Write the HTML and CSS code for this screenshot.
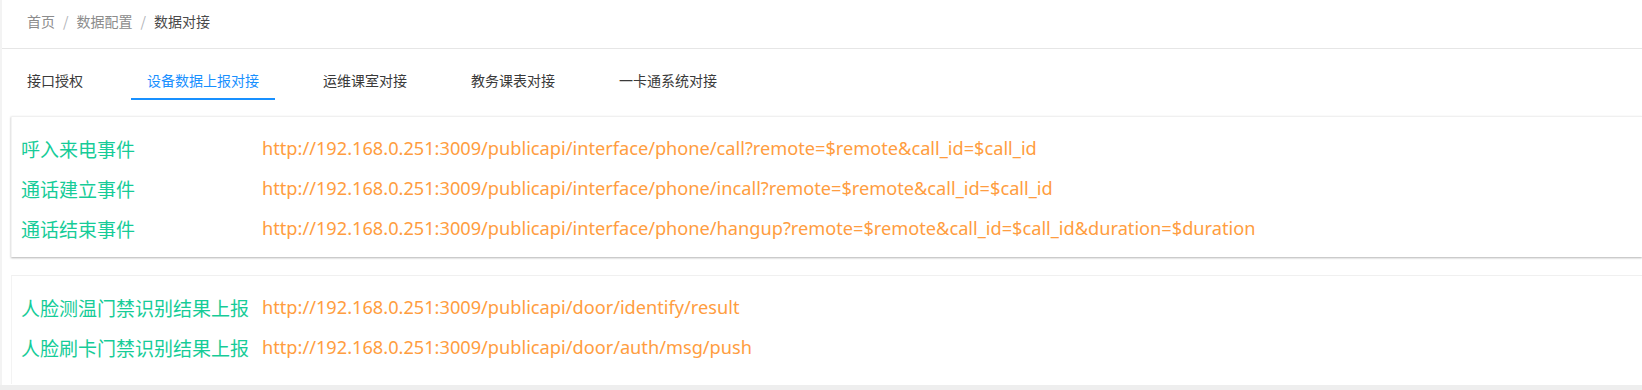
FILE: index.html
```html
<!DOCTYPE html>
<html lang="zh-CN">
<head>
<meta charset="utf-8">
<title>数据对接</title>
<link rel="stylesheet" href="styles.css">
</head>
<body>
<div class="app">
  <div class="navbar">
    <nav class="breadcrumb">
      <span class="crumb">首页</span><span class="sep">/</span><span class="crumb">数据配置</span><span class="sep">/</span><span class="crumb current">数据对接</span>
    </nav>
  </div>
  <div class="main">
    <div class="tabs">
      <div class="tab">接口授权</div>
      <div class="tab active">设备数据上报对接</div>
      <div class="tab">运维课室对接</div>
      <div class="tab">教务课表对接</div>
      <div class="tab">一卡通系统对接</div>
    </div>
    <div class="card card-shadow">
      <div class="row"><span class="label">呼入来电事件</span><span class="url">http://192.168.0.251:3009/publicapi/interface/phone/call?remote=$remote&amp;call_id=$call_id</span></div>
      <div class="row"><span class="label">通话建立事件</span><span class="url">http://192.168.0.251:3009/publicapi/interface/phone/incall?remote=$remote&amp;call_id=$call_id</span></div>
      <div class="row"><span class="label">通话结束事件</span><span class="url">http://192.168.0.251:3009/publicapi/interface/phone/hangup?remote=$remote&amp;call_id=$call_id&amp;duration=$duration</span></div>
    </div>
    <div class="card card-plain">
      <div class="row"><span class="label">人脸测温门禁识别结果上报</span><span class="url">http://192.168.0.251:3009/publicapi/door/identify/result</span></div>
      <div class="row"><span class="label">人脸刷卡门禁识别结果上报</span><span class="url">http://192.168.0.251:3009/publicapi/door/auth/msg/push</span></div>
    </div>
  </div>
</div>
</body>
</html>
```

FILE: styles.css
```css
html, body {
  margin: 0;
  padding: 0;
}
body {
  background: #eeeeee;
  font-family: "Noto Sans", "Noto Sans CJK SC", sans-serif;
  overflow: hidden;
}
.app {
  height: 385px;
  background: #ffffff;
  border-left: 2px solid #f3f3f3;
  box-sizing: border-box;
  overflow: hidden;
}
.navbar {
  height: 48px;
  border-bottom: 1px solid #e6e6e6;
}
.breadcrumb {
  padding-left: 25px;
  line-height: 43px;
  font-size: 14px;
  font-family: "Noto Sans CJK SC", sans-serif;
}
.crumb {
  color: #8c8c8c;
}
.crumb.current {
  color: #4a4a4a;
}
.sep {
  color: #b0b3b8;
  margin: 0 8px;
}
.main {
  padding-left: 9px;
}
.tabs {
  display: flex;
  gap: 32px;
  margin-bottom: 16px;
}
.tab {
  padding: 20px 16px 7px;
  line-height: 22px;
  font-size: 14px;
  font-family: "Noto Sans CJK SC", sans-serif;
  color: #3a3a3a;
  border-bottom: 2px solid transparent;
}
.tab.active {
  color: #1890ff;
  border-bottom-color: #1890ff;
}
.card {
  background: #ffffff;
  border-top: 1px solid #f0f0f0;
  border-left: 1px solid #f3f3f3;
  padding-left: 9px;
}
.card-shadow {
  padding-top: 11px;
  padding-bottom: 9px;
  box-shadow: 0 1px 2px rgba(0, 0, 0, 0.3);
}
.card-plain {
  margin-top: 18px;
  padding-top: 11px;
  padding-bottom: 17px;
}
.row {
  height: 40px;
  display: flex;
  align-items: center;
  white-space: nowrap;
}
.label {
  display: inline-block;
  min-width: 230px;
  margin-right: 11px;
  font-size: 19px;
  color: #16cc98;
  font-family: "Noto Sans CJK SC", sans-serif;
}
.url {
  font-size: 18.2px;
  color: #ff9d40;
  font-family: "Noto Sans", "Noto Sans CJK SC", sans-serif;
}
```
